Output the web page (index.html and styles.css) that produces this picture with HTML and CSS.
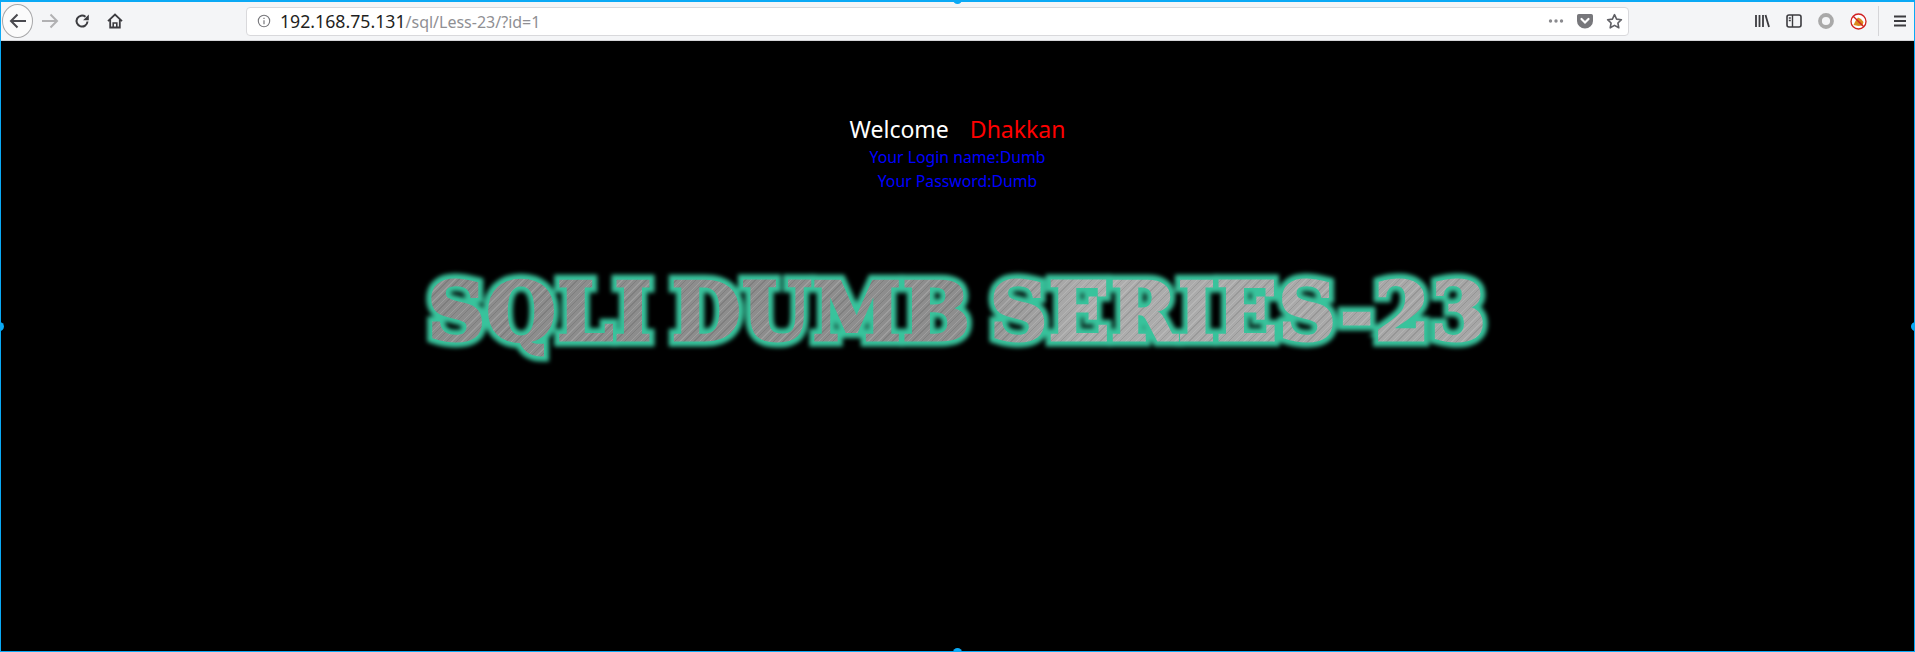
FILE: index.html
```html
<!DOCTYPE html>
<html lang="en">
<head>
<meta charset="utf-8">
<title>Less-23</title>
<link rel="stylesheet" href="styles.css">
</head>
<body>
<div class="window">
  <header class="toolbar">
    <nav class="nav-buttons">
      <span class="back">
        <svg width="20" height="20" viewBox="0 0 20 20"><path d="M18 10H3M9.500 3.500L3 10l6.500 6.500" fill="none" stroke="#4a4a4f" stroke-width="2"/></svg>
      </span>
      <span class="tool tool-forward">
        <svg width="20" height="20" viewBox="0 0 20 20"><path d="M2 10h15M10.500 3.500L17 10l-6.500 6.500" fill="none" stroke="#b1b1b3" stroke-width="2"/></svg>
      </span>
      <span class="tool tool-reload">
        <svg width="16" height="16" viewBox="0 0 16 16"><path d="M13.500 8.500A5.500 5.500 0 1 1 11.500 3.800" fill="none" stroke="#3c3c40" stroke-width="2"/><path d="M14.800 1.500v5.700H9.100z" fill="#3c3c40"/></svg>
      </span>
      <span class="tool tool-home">
        <svg width="16" height="16" viewBox="0 0 16 16"><path d="M1 8.200L8 1.500l7 6.700M3.200 6.800v7.700h9.600V6.800" fill="none" stroke="#3c3c40" stroke-width="1.800"/><path d="M6.200 14.500V10h3.600v4.500" fill="none" stroke="#3c3c40" stroke-width="1.600"/></svg>
      </span>
    </nav>
    <div class="urlbar">
      <svg class="info" width="14" height="14" viewBox="0 0 14 14"><circle cx="7" cy="7" r="5.700" fill="none" stroke="#77777b" stroke-width="1.100"/><path d="M7 6.200v4M7 3.700v1.300" stroke="#77777b" stroke-width="1.200"/></svg>
      <span class="url"><span class="host">192.168.75.131</span>/sql/Less-23/?id=1</span>
      <span class="url-actions">
        <svg width="16" height="6" viewBox="0 0 16 6"><circle cx="2.500" cy="3" r="1.700" fill="#8a8a8e"/><circle cx="8" cy="3" r="1.700" fill="#8a8a8e"/><circle cx="13.500" cy="3" r="1.700" fill="#8a8a8e"/></svg>
        <svg width="16" height="15" viewBox="0 0 16 15"><path d="M1.800 0h12.400A1.800 1.800 0 0 1 16 1.800V7A8 7.500 0 0 1 0 7V1.800A1.800 1.800 0 0 1 1.800 0z" fill="#77777b"/><path d="M4.500 5L8 8.500 11.500 5" fill="none" stroke="#fff" stroke-width="2.200" stroke-linecap="round"/></svg>
        <svg width="17" height="17" viewBox="0 0 17 17"><path d="M8.500 1.700l2.100 4.400 4.800.6-3.500 3.300.9 4.800-4.300-2.400-4.300 2.400.9-4.800L1.600 6.700l4.800-.6z" fill="none" stroke="#5f5f64" stroke-width="1.600" stroke-linejoin="round"/></svg>
      </span>
    </div>
    <div class="right-tools">
      <svg width="16" height="16" viewBox="0 0 16 16"><path d="M2 2v12M5.500 2v12M9 2v12M11.500 2l3.500 12" fill="none" stroke="#3c3c40" stroke-width="1.800"/></svg>
      <svg width="16" height="14" viewBox="0 0 16 14"><rect x="1" y="1" width="14" height="12" rx="2" fill="none" stroke="#3c3c40" stroke-width="1.600"/><path d="M6.500 1v12M2.800 4h2M2.800 6.500h2" stroke="#3c3c40" stroke-width="1.400"/></svg>
      <svg width="16" height="16" viewBox="0 0 16 16"><circle cx="8" cy="8" r="6" fill="none" stroke="#a9a9a9" stroke-width="3.800"/></svg>
      <svg width="17" height="17" viewBox="0 0 17 17"><circle cx="8.500" cy="8.500" r="7.500" fill="#fff" stroke="#d02020" stroke-width="1.300"/><path d="M3.500 12l2.500-5 2-2.500 3 1.500 2.500 3-1 3.500-4 .5z" fill="#d98a1e"/><path d="M3.200 3.200l10.600 10.600" stroke="#d02020" stroke-width="1.400"/></svg>
      <span class="sep"></span>
      <svg width="14" height="12" viewBox="0 0 14 12"><path d="M1 1.500h12M1 6h12M1 10.500h12" stroke="#3c3c40" stroke-width="1.800"/></svg>
    </div>
  </header>
  <main class="page">
    <div class="greeting"><span class="welcome">Welcome</span><span class="name">Dhakkan</span></div>
    <div class="login">Your Login name:Dumb</div>
    <div class="login">Your Password:Dumb</div>
    <div class="banner" data-text="SQLI DUMB SERIES-23"><span class="banner-text">SQLI DUMB SERIES-23</span></div>
  </main>
  <span class="handle handle-top"></span>
  <span class="handle handle-left"></span>
  <span class="handle handle-right"></span>
  <span class="handle handle-bottom"></span>
</div>
</body>
</html>
```
FILE: styles.css
```css
* { box-sizing: border-box; }
html, body { margin: 0; height: 100%; overflow: hidden; background: #000; }
.window {
  position: relative;
  width: 1915px;
  height: 652px;
  border: 1px solid #0aa9f5;
  border-top: 2px solid #0aa9f5;
  display: flex;
  flex-direction: column;
  font-family: "Noto Sans", sans-serif;
}
.toolbar {
  height: 39px;
  flex: none;
  background: #f4f5f7;
  border-bottom: 1px solid #d5d5d8;
  display: flex;
  align-items: center;
}
.nav-buttons { display: flex; align-items: center; width: 245px; flex: none; }
.back {
  width: 31px; height: 34px; border-radius: 50%;
  border: 1px solid #a8a8aa; background: #fbfbfb;
  margin-left: 1px;
  display: flex; align-items: center; justify-content: center;
}
.tool { display: flex; align-items: center; justify-content: center; }
.tool-forward { margin-left: 7px; }
.tool-reload { margin-left: 14px; }
.tool-home { margin-left: 17px; }
.urlbar {
  width: 1383px;
  height: 29px;
  flex: none;
  background: #fff;
  border: 1px solid #d9d9dc;
  border-radius: 4px;
  display: flex;
  align-items: center;
  padding-left: 10px;
}
.info { flex: none; }
.url { margin-left: 9px; font-size: 16px; color: #8f8f93; }
.host { color: #1f1f22; font-size: 17.700px; }
.url-actions { margin-left: auto; display: flex; align-items: center; gap: 13px; padding-right: 5px; }
.right-tools { display: flex; align-items: center; margin-left: 125px; gap: 16px; }
.sep { width: 1px; height: 30px; background: #d5d5d8; margin: 0 -2px 0 -5px; }
.page {
  flex: 1;
  background: #000;
  display: flex;
  flex-direction: column;
  align-items: center;
  padding-top: 72px;
}
.greeting { font-size: 23px; line-height: 32px; color: #fff; display: flex; gap: 21px; }
.name { color: #f00; }
.login { font-size: 15.800px; line-height: 24px; color: #00f; }
.banner {
  position: relative;
  margin-top: 74px;
  font-family: "DejaVu Serif", serif;
  font-weight: bold;
  font-size: 80px;
  line-height: 90px;
  letter-spacing: 1px;
  word-spacing: -10px;
  white-space: nowrap;
}
.banner::before, .banner::after {
  content: attr(data-text);
  position: absolute;
  inset: 0;
  color: transparent;
}
.banner::before {
  -webkit-text-stroke: 13px #38c39c;
  filter: blur(2px);
}
.banner::after {
  -webkit-text-stroke: 1px rgba(255, 255, 255, .55);
}
.banner-text {
  position: relative;
  z-index: 1;
  display: block;
  color: transparent;
  -webkit-text-stroke: 3px transparent;
  background:
    repeating-linear-gradient(135deg, rgba(255,255,255,.14) 0 1px, transparent 1px 3px, rgba(0,0,0,.1) 3px 4px, transparent 4px 7px),
    linear-gradient(90deg, #8c8c8c 0, #8e8e8e 50%, #adadad 62%, #a6a6a6 100%);
  -webkit-background-clip: text;
  background-clip: text;
}
.handle { position: absolute; width: 9px; height: 9px; border-radius: 50%; background: #0aa9f5; }
.handle-top { top: -7px; left: 952px; }
.handle-left { top: 320px; left: -6px; }
.handle-right { top: 320px; right: -6px; }
.handle-bottom { bottom: -6px; left: 952px; }
```
